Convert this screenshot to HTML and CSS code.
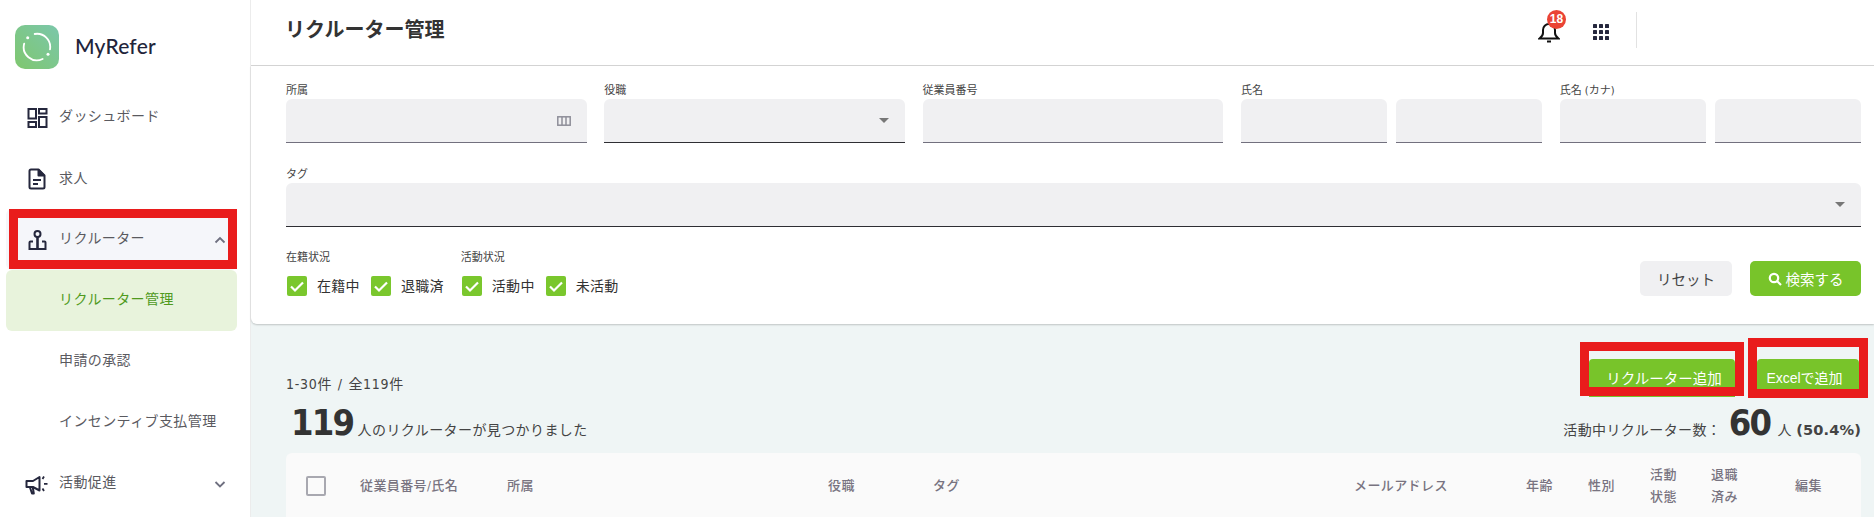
FILE: index.html
```html
<!DOCTYPE html>
<html lang="ja">
<head>
<meta charset="utf-8">
<title>リクルーター管理</title>
<link rel="stylesheet" href="styles.css">
</head>
<body>
<div class="app">
  <aside class="sidebar">
    <div class="brand">
      <div class="logo">
        <svg width="30" height="30" viewBox="0 0 30 30" fill="none" stroke="#fff" stroke-width="1.800" stroke-linecap="round">
          <path d="M12.700 2A13.200 13.200 0 0 1 28 17.300"/>
          <path d="M20.600 27A13.200 13.200 0 0 1 2.200 11.600"/>
          <circle cx="5.700" cy="5.700" r="1.500" fill="#fff" stroke="none"/>
          <circle cx="26" cy="22.200" r="1.500" fill="#fff" stroke="none"/>
        </svg>
      </div>
      <span class="brand-name">MyRefer</span>
    </div>
    <nav class="nav">
      <a class="nav-item">
        <svg class="nav-icon" viewBox="0 0 22 22" fill="none" stroke="#25273d" stroke-width="2"><rect x="1.500" y="2" width="7.500" height="9.500"/><rect x="12" y="2" width="7.500" height="4.500"/><rect x="1.500" y="15" width="7.500" height="5"/><rect x="12" y="10" width="7.500" height="10"/></svg>
        <span>ダッシュボード</span>
      </a>
      <a class="nav-item">
        <svg class="nav-icon" viewBox="0 0 22 22" fill="none" stroke="#25273d" stroke-width="2" stroke-linejoin="round"><path d="M4 1.500h7.500L17.500 7.500V19a1.500 1.500 0 0 1-1.500 1.500H4A1.500 1.500 0 0 1 2.500 19V3A1.500 1.500 0 0 1 4 1.500z"/><path d="M11.500 2l5.500 5.500h-5.500z" fill="#25273d"/><path d="M6 12h8M6 16h5"/></svg>
        <span class="nav-low">求人</span>
      </a>
      <a class="nav-item nav-open">
        <svg class="nav-icon" viewBox="0 0 22 22" fill="none" stroke="#25273d" stroke-width="2"><circle cx="10.500" cy="5" r="3"/><path d="M10.500 8v12" stroke-width="2.600"/><path d="M6 12.500H3.500a1 1 0 0 0-1 1V20h16v-6.500a1 1 0 0 0-1-1H15"/></svg>
        <span>リクルーター</span>
        <svg class="nav-chevron" viewBox="0 0 12 8" fill="none" stroke="#6f7080" stroke-width="1.800"><path d="M1.500 6.500L6 2l4.500 4.500"/></svg>
      </a>
      <a class="nav-item nav-active"><span>リクルーター管理</span></a>
      <a class="nav-item nav-sub"><span>申請の承認</span></a>
      <a class="nav-item nav-sub"><span>インセンティブ支払管理</span></a>
      <a class="nav-item">
        <svg class="nav-icon nav-icon-wide" viewBox="0 0 24 22" fill="none" stroke="#25273d" stroke-width="2" stroke-linejoin="round"><path d="M1.500 8H8l6.500-4v13.500L8 14H1.500z"/><path d="M5 14.500l2 6h1.800L7.800 14.500"/><path d="M17.500 6l1.500-2.500M19 10.800h3.500M17.500 15.500l1.500 2.500" stroke-width="1.800"/></svg>
        <span>活動促進</span>
        <svg class="nav-chevron" viewBox="0 0 12 8" fill="none" stroke="#6f7080" stroke-width="1.800"><path d="M1.500 2L6 6.500 10.500 2"/></svg>
      </a>
    </nav>
  </aside>

  <main class="main">
    <header class="topbar">
      <h1 class="title">リクルーター管理</h1>
      <div class="top-actions">
        <div class="bell">
          <svg width="22" height="24" viewBox="0 0 22 24" fill="none" stroke="#111" stroke-width="2"><path d="M1.500 18.500c2-1.500 3.500-3 3.500-5.500V10a6 6 0 0 1 12 0v3c0 2.500 1.500 4 3.500 5.500z"/><path d="M9 21.500h4"/></svg>
          <span class="badge">18</span>
        </div>
        <svg class="apps" width="16" height="16" viewBox="0 0 16 16" fill="#25273d"><rect x="0" y="0" width="4" height="4" rx=".6"/><rect x="6" y="0" width="4" height="4" rx=".6"/><rect x="12" y="0" width="4" height="4" rx=".6"/><rect x="0" y="6" width="4" height="4" rx=".6"/><rect x="6" y="6" width="4" height="4" rx=".6"/><rect x="12" y="6" width="4" height="4" rx=".6"/><rect x="0" y="12" width="4" height="4" rx=".6"/><rect x="6" y="12" width="4" height="4" rx=".6"/><rect x="12" y="12" width="4" height="4" rx=".6"/></svg>
        <div class="divider"></div>
      </div>
    </header>

    <section class="filters">
      <div class="filter-row">
        <div class="field f-wide"><label>所属</label>
          <div class="input soft icon-end">
            <svg width="14" height="10" viewBox="0 0 14 10" fill="none" stroke="#8e8e99" stroke-width="1.500"><rect x=".8" y=".8" width="12.400" height="8.400"/><path d="M5 1v8M9 1v8"/></svg>
          </div>
        </div>
        <div class="field f-wide"><label>役職</label>
          <div class="input dark icon-end"><i class="caret"></i></div>
        </div>
        <div class="field f-wide"><label>従業員番号</label><div class="input soft"></div></div>
        <div class="field f-pair"><label>氏名</label>
          <div class="pair"><div class="input soft"></div><div class="input soft"></div></div>
        </div>
        <div class="field f-pair"><label>氏名 (カナ)</label>
          <div class="pair"><div class="input soft"></div><div class="input soft"></div></div>
        </div>
      </div>
      <div class="field tag-field"><label>タグ</label>
        <div class="input dark icon-end"><i class="caret"></i></div>
      </div>
      <div class="filter-bottom">
        <div class="status-groups">
          <div class="status">
            <label>在籍状況</label>
            <div class="checks">
              <span class="check"><i class="box"><svg viewBox="0 0 20 20" fill="none" stroke="#fff" stroke-width="2.200"><path d="M4 10.500l4 4 8-8"/></svg></i>在籍中</span>
              <span class="check"><i class="box"><svg viewBox="0 0 20 20" fill="none" stroke="#fff" stroke-width="2.200"><path d="M4 10.500l4 4 8-8"/></svg></i>退職済</span>
            </div>
          </div>
          <div class="status">
            <label>活動状況</label>
            <div class="checks">
              <span class="check"><i class="box"><svg viewBox="0 0 20 20" fill="none" stroke="#fff" stroke-width="2.200"><path d="M4 10.500l4 4 8-8"/></svg></i>活動中</span>
              <span class="check"><i class="box"><svg viewBox="0 0 20 20" fill="none" stroke="#fff" stroke-width="2.200"><path d="M4 10.500l4 4 8-8"/></svg></i>未活動</span>
            </div>
          </div>
        </div>
        <div class="filter-buttons">
          <button class="btn btn-reset">リセット</button>
          <button class="btn btn-search">
            <svg width="14" height="14" viewBox="0 0 14 14" fill="none" stroke="#fff" stroke-width="2.200"><circle cx="6" cy="6" r="4.200"/><path d="M9 9l4 4"/></svg>
            検索する
          </button>
        </div>
      </div>
    </section>

    <section class="results">
      <div class="results-top">
        <p class="range">1-30件 / 全119件</p>
        <div class="add-buttons">
          <button class="btn-add btn-add-a">リクルーター追加</button>
          <button class="btn-add btn-add-b">Excelで追加</button>
        </div>
      </div>
      <div class="summary">
        <p class="found"><strong>119</strong> 人のリクルーターが見つかりました</p>
        <p class="active">活動中リクルーター数： <strong>60</strong> 人 <b>(50.4%)</b></p>
      </div>
      <div class="table-card">
        <div class="thead">
          <i class="thead-check"></i>
          <span>従業員番号/氏名</span>
          <span>所属</span>
          <span>役職</span>
          <span>タグ</span>
          <span>メールアドレス</span>
          <span>年齢</span>
          <span>性別</span>
          <span>活動<br>状態</span>
          <span>退職<br>済み</span>
          <span>編集</span>
        </div>
      </div>
    </section>
  </main>
</div>
<div class="mark mark-nav"></div>
<div class="mark mark-add"></div>
<div class="mark mark-excel"></div>
</body>
</html>
```

FILE: styles.css
```css
* { box-sizing: border-box; }
html, body { margin: 0; height: 517px; overflow: hidden; }
body {
  position: relative;
  font-family: "DejaVu Sans Condensed", "DejaVu Sans", "Noto Sans CJK JP", sans-serif;
  color: #333;
  background: #fff;
}
p, h1 { margin: 0; }
label { display: block; }

.app { display: flex; height: 517px; overflow: hidden; }

/* sidebar */
.sidebar {
  width: 251px;
  flex: none;
  background: #fff;
  border-right: 1px solid #ececec;
}
.brand { display: flex; align-items: center; height: 87px; padding: 6px 0 0 15px; }
.logo {
  width: 44px; height: 44px;
  border-radius: 10px;
  background: linear-gradient(45deg, #7fc76e, #7bc7ab);
  display: flex; align-items: center; justify-content: center;
}
.brand-name {
  margin: 0 0 2px 16px;
  font-family: Lato, sans-serif;
  font-size: 21px;
  font-weight: 500;
  letter-spacing: .2px;
  color: #22243a;
}
.nav { display: flex; flex-direction: column; padding: 0 13px 0 6px; }
.nav-item {
  display: flex; align-items: center;
  height: 61px;
  padding-left: 21px;
  border-radius: 6px;
  font-size: 14px;
  line-height: 20px;
  letter-spacing: .4px;
  color: #5a5a5f;
}
.nav-item span { margin-bottom: 4px; }
.nav-item .nav-low { margin-bottom: 2px; }
.nav-icon { width: 22px; height: 22px; flex: none; margin-right: 10px; }
.nav-icon-wide { width: 24px; margin-left: -2px; }
.nav-chevron { width: 12px; height: 8px; margin-left: auto; margin-right: 11px; }
.nav-open { background: #f5f6fa; }
.nav-active { padding-left: 53px; background: #e8f3dc; color: #4f9a1d; }
.nav-sub { padding-left: 53px; }

/* top bar */
.main { flex: 1; min-width: 0; display: flex; flex-direction: column; background: #eff5f5; }
.topbar {
  display: flex; align-items: center; justify-content: space-between;
  height: 66px;
  flex: none;
  padding: 0 237px 5px 34px;
  background: #fff;
  border-bottom: 1px solid #d5d5d5;
}
.title { margin-bottom: 1px; font-size: 20px; line-height: 28px; font-weight: 700; color: #333; }
.top-actions { display: flex; align-items: center; }
.bell { position: relative; width: 22px; height: 24px; margin-top: 3px; }
.badge {
  position: absolute; left: 9px; top: -10px;
  width: 19px; height: 19px;
  border-radius: 50%;
  background: #ea4335;
  color: #fff;
  font-family: "Liberation Sans", sans-serif;
  font-size: 12px; font-weight: 700; line-height: 19px; text-align: center;
}
.apps { margin-left: 33px; margin-top: 4px; }
.divider { width: 1px; height: 36px; margin-left: 27px; background: #e2e2e2; }

/* filters */
.filters {
  height: 258px;
  flex: none;
  padding: 18px 13px 0 35px;
  background: #fff;
  box-shadow: 0 1px 2px rgba(0,0,0,.2);
  border-radius: 0 0 0 6px;
  position: relative;
}
.filter-row { display: flex; gap: 17.500px; }
.field label { height: 15px; font-size: 11px; line-height: 14px; color: #444; }
.status label { font-size: 11px; line-height: 15px; color: #444; }
.f-wide { flex: 301 1 0; }
.f-pair { flex: 301.500 1 0; }
.pair { display: flex; gap: 9px; }
.pair .input { flex: 1; }
.input {
  height: 44px;
  background: #f0f0f2;
  border-radius: 6px 6px 0 0;
  border-bottom: 1px solid #72707e;
}
.input.dark { border-bottom-color: #2e2e33; }
.icon-end { display: flex; align-items: center; justify-content: flex-end; padding-right: 16px; }
.caret { width: 0; height: 0; border: 5px solid transparent; border-top-color: #777; border-bottom: 0; }
.tag-field { margin-top: 25px; }
.filter-bottom { display: flex; justify-content: space-between; align-items: flex-end; margin-top: 23px; }
.status-groups { display: flex; gap: 17px; }
.status label { margin-bottom: 11px; }
.checks { display: flex; gap: 11px; padding-left: 1px; }
.check { display: flex; align-items: center; font-size: 14px; line-height: 20px; letter-spacing: .3px; color: #333; }
.box { width: 20px; height: 20px; margin-right: 10px; border-radius: 2px; background: #7ac72d; }
.box svg { display: block; width: 20px; height: 20px; }
.filter-buttons { display: flex; gap: 18px; }
.btn {
  height: 35px; border: 0; border-radius: 5px;
  font-family: inherit; font-size: 14.500px;
  display: flex; align-items: center; justify-content: center; gap: 4px;
}
.btn-reset { width: 92px; background: #f0f0f2; color: #444; }
.btn-search { width: 111px; background: #78c42a; color: #fff; }

/* results */
.results { flex: 1; padding: 0 13px 0 35px; min-height: 0; overflow: hidden; }
.results-top { display: flex; justify-content: space-between; align-items: flex-start; height: 73px; padding-top: 35px; }
.range { margin-top: 15px; font-size: 14px; line-height: 20px; letter-spacing: .7px; word-spacing: 1px; color: #444; }
.add-buttons { display: flex; gap: 22px; padding-right: 2px; }
.btn-add {
  height: 38px; border: 0; border-radius: 4px 4px 0 0;
  background: #78c42a; color: #fff;
  font-family: inherit; font-size: 14.500px;
  padding: 0 0 2px;
}
.btn-add-a { width: 146px; padding-left: 4px; }
.btn-add-b { width: 102px; padding-right: 7px; font-family: "Liberation Sans", "Noto Sans CJK JP", sans-serif; font-size: 14px; }
.summary { display: flex; justify-content: space-between; align-items: baseline; height: 56px; padding-top: 2px; }
.found { padding-left: 5px; font-size: 14px; letter-spacing: .4px; color: #444; }
.found strong { font-size: 36px; font-weight: 700; letter-spacing: -1.800px; color: #333; line-height: 48px; }
.active { font-size: 14px; letter-spacing: .4px; color: #444; }
.active strong { font-size: 36px; margin: 0 3px; letter-spacing: -1.800px; color: #333; line-height: 48px; }
.active b { font-family: "DejaVu Sans", sans-serif; font-size: 14.600px; font-weight: 700; letter-spacing: .1px; }
.table-card { height: 65px; background: #fafafa; border-radius: 6px 6px 0 0; }
.thead {
  display: grid;
  grid-template-columns: 54px 147px 321px 105px 421px 172px 62px 62px 61px 84px 1fr;
  align-items: center;
  height: 65px;
  padding-left: 20px;
  font-size: 13px;
  font-weight: 500;
  line-height: 22px;
  letter-spacing: .4px;
  color: #787380;
}
.thead-check { width: 20px; height: 20px; border: 2px solid #a8a8b0; border-radius: 2px; }

/* annotation overlays */
.mark { position: absolute; border: 9px solid #e91c1c; pointer-events: none; }
.mark-nav { left: 9px; top: 209px; width: 228px; height: 60px; }
.mark-add { left: 1580px; top: 342px; width: 164px; height: 54px; }
.mark-excel { left: 1748px; top: 338px; width: 120px; height: 60px; }
```
